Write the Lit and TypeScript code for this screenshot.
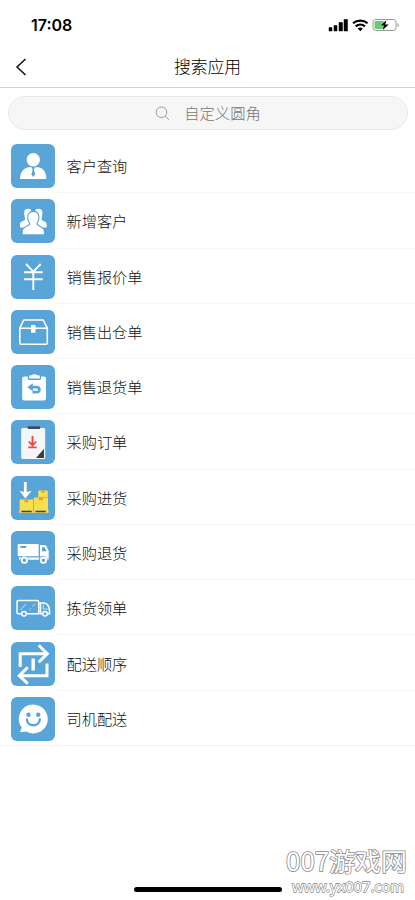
import { LitElement, html, css, svg } from 'lit';
import { customElement } from 'lit/decorators.js';

const icons = {
  customer: svg`<circle cx="22.3" cy="15.8" r="6.7" fill="#fff"/>
    <path d="M9 35C9 28 13 23.5 18 23.2H27C32 23.5 35.3 28 35.3 35Z" fill="#fff"/>
    <path d="M20.8 23h3l-.8 3 1.200 4.500-1.900 2.400-1.900-2.400 1.200-4.500Z" fill="#59a5d8"/>`,
  group: svg`<path d="M17 9.700c-2.800 0-4 1.800-3.800 4.300 0 3 .8 4 .8 6.500 0 1.500-5 1.500-5 4.500v3.500h11V10.500c-1-.6-1.800-.8-3-.8ZM27.600 9.700c2.800 0 4 1.800 3.800 4.300 0 3-.8 4-.8 6.500 0 1.500 5 1.500 5 4.500v3.500h-11V10.500c1-.6 1.800-.8 3-.8Z" fill="#fff"/>
    <path d="M22.300 13c-3.800 0-5.300 2.800-5 6 .2 2.600 1 4.200 2 5.300 0 4.200-7.600 2.700-7.600 8.700v2.300h21.200V33c0-6-7.600-4.500-7.600-8.700 1-1.100 1.800-2.700 2-5.300.3-3.200-1.200-6-5-6Z" fill="#fff" stroke="#59a5d8" stroke-width="2.400" paint-order="stroke"/>`,
  yen: svg`<path d="M15 9l7.300 7.700L29.700 9M13 17.200h18.700M13 24.200h18.700M22.300 16.700V35" fill="none" stroke="#fff" stroke-width="1.900"/>`,
  box: svg`<path d="M8.800 18.200L12.800 10h19.400l4.100 8.200V33q0 1.300-1.300 1.300H10.100q-1.300 0-1.300-1.300ZM8.800 18.200h27.500" fill="none" stroke="#fff" stroke-width="1.600" stroke-linejoin="round"/>
    <rect x="20" y="15" width="4.500" height="7.800" rx=".6" fill="#fff"/>`,
  back: svg`<rect x="11.200" y="11.500" width="23.800" height="24" rx="2" fill="#fff"/>
    <path d="M16.800 10.500v3q0 1.400 1.400 1.400h10.500q1.400 0 1.400-1.400v-3Z" fill="#59a5d8"/>
    <path d="M18.200 13.500v-2q0-1.200 1.200-1.200h1.600q.5-1 2.500-1t2.500 1h1.600q1.200 0 1.200 1.200v2Z" fill="#fff"/>
    <path d="M19 22.200h6.200c4.300 0 4.300 5 .3 5h-4" fill="none" stroke="#59a5d8" stroke-width="2.700"/>
    <path d="M16.300 22.200l5.500-4v8Z" fill="#59a5d8"/>`,
  order: svg`<rect x="10.200" y="8" width="24" height="31" rx="1.500" fill="#f5f6f7"/>
    <path d="M16.700 9V7.500q0-1.200 1.200-1.200h10q1.200 0 1.200 1.200V9Z" fill="#3e4e5c"/>
    <path d="M21.500 16v9M17.800 21.500l3.700 3.900 3.700-3.900M17.300 27.400h8.400" fill="none" stroke="#ee4545" stroke-width="1.800"/>
    <path d="M25 38h8V28.700Z" fill="#32414e"/>`,
  stock: svg`<path d="M12.900 6h2.800v10l5-1.300-6.400 7.800L8.500 14.700l4.400 1.300Z" fill="#fff"/>
    <path d="M8.700 23.500h13.600V34H8.700ZM22.800 21.500H37V34H22.800ZM27.200 14.500h9.600v6.600h-9.600Z" fill="#f8df4d"/>
    <path d="M13.500 23.500h3.800v3.200l-1.900-1-1.900 1ZM28 21.500h3.800v3.200l-1.900-1-1.900 1ZM30.500 14.500h3v2.500l-1.500-.8-1.500.8Z" fill="#e39a39"/>
    <path d="M8.200 33.800h29.300V37H8.200Z" fill="#ead66a"/>
    <path d="M10.500 35.500h10.200M24.500 35.500h10.200" stroke="#3f463e" stroke-width="1.500"/>
    <path d="M22.500 22v15" stroke="#a8a95c" stroke-width=".6"/>`,
  truck: svg`<path d="M7.700 13h20v12.300h-20q-1 0-1-1V14q0-1 1-1ZM29 14h4.500q1.600 0 2.200 1.500l2 4.500v8.500h-2c-1-4.800-6-4.500-6.700-2ZM8 26.500h20.500l-1 2.300h-10c-.8-3.600-7.400-3.600-8.300 0H8Z" fill="#fff"/>
    <path d="M9.300 15h6v2h-6ZM31 16.200h2.800l1.600 4H31Z" fill="#59a5d8"/>
    <circle cx="13.400" cy="29.200" r="3.900" fill="#59a5d8"/><circle cx="32.400" cy="29.200" r="3.900" fill="#59a5d8"/>
    <circle cx="13.400" cy="29.200" r="2.700" fill="none" stroke="#fff" stroke-width="1.800"/><circle cx="32.400" cy="29.200" r="2.700" fill="none" stroke="#fff" stroke-width="1.800"/>`,
  van: svg`<path d="M10.400 27.800H7.200q-1.200 0-1.200-1.200V15.800q0-1.200 1.200-1.200h19.300q1.200 0 1.200 1.200v12H15.600M31.400 27.800h-1.900V17h3.500c3.500 0 5.500 4 5.500 8v2.800h-2" fill="none" stroke="#fff" stroke-width="1.500"/>
    <circle cx="13" cy="27.800" r="2.300" fill="none" stroke="#fff" stroke-width="1.500"/><circle cx="34" cy="27.800" r="2.300" fill="none" stroke="#fff" stroke-width="1.500"/>
    <path d="M9.500 24l5.500-6M18.500 24l1.500-1.700M21.500 20.500l2.500-2.800M32.300 18.500v4.500h4.500" fill="none" stroke="#d5ebf8" stroke-width=".9"/>`,
  route: svg`<path d="M9.200 25V11.700h26M27.700 3.200l8.600 8.600-8.600 8.400M36 21.500v12.200H9M16.800 25.200L8.200 33.700l8.600 8" fill="none" stroke="#fff" stroke-width="3"/>
    <path d="M22.200 16.500v12" stroke="#fff" stroke-width="3.400"/>`,
  smile: svg`<path d="M22.300 7.500a14.500 14.500 0 1 1-7.200 27.100C13.500 35 11 35.300 9 35l1.800-4.200A14.500 14.500 0 0 1 22.300 7.500Z" fill="#fff"/>
    <circle cx="17.500" cy="17.800" r="2.200" fill="#59a5d8"/><circle cx="27.200" cy="17.800" r="2.200" fill="#59a5d8"/>
    <path d="M15.900 22.500c.3 7.600 12.600 7.600 12.900 0" fill="none" stroke="#59a5d8" stroke-width="2.400" stroke-linecap="round"/>`,
};

const apps: { label: string; icon: keyof typeof icons }[] = [
  { label: '客户查询', icon: 'customer' },
  { label: '新增客户', icon: 'group' },
  { label: '销售报价单', icon: 'yen' },
  { label: '销售出仓单', icon: 'box' },
  { label: '销售退货单', icon: 'back' },
  { label: '采购订单', icon: 'order' },
  { label: '采购进货', icon: 'stock' },
  { label: '采购退货', icon: 'truck' },
  { label: '拣货领单', icon: 'van' },
  { label: '配送顺序', icon: 'route' },
  { label: '司机配送', icon: 'smile' },
];

@customElement('app-root')
export class AppRoot extends LitElement {
  static styles = css`
    :host {
      display: flex;
      flex-direction: column;
      position: relative;
      box-sizing: border-box;
      height: 900px;
      overflow: hidden;
      background: #fff;
      color: #111;
      font-family: 'Noto Sans CJK SC', sans-serif;
      font-weight: 300;
    }
    svg { display: block; flex: none; }
    .status {
      display: flex;
      align-items: center;
      height: 50px;
      padding: 0 15px 0 31px;
      box-sizing: border-box;
    }
    .time {
      flex: 1;
      font: 600 16px/20px Inter, sans-serif;
      color: #000;
    }
    .nav {
      display: grid;
      grid-template-columns: 40px 1fr 40px;
      align-items: center;
      height: 38px;
      box-sizing: border-box;
      padding-bottom: 4px;
      border-bottom: 1px solid #d4d4d4;
    }
    .back { margin-left: 15px; }
    .title {
      padding-bottom: 2px;
      text-align: center;
      font-size: 16.8px;
      line-height: 24px;
      color: #000;
    }
    .search {
      display: flex;
      align-items: center;
      justify-content: center;
      gap: 14px;
      height: 34px;
      margin: 8px 7px 8px 8px;
      box-sizing: border-box;
      border: 1px solid #e9e9e9;
      border-radius: 17px;
      background: #f6f6f6;
      color: #777;
      font-size: 15.3px;
      line-height: 22px;
    }
    .hint { padding-bottom: 2px; }
    .row {
      display: flex;
      align-items: center;
      height: 55.27px;
      box-sizing: border-box;
      padding-left: 11px;
      border-bottom: 1px solid transparent;
    }
    .label {
      display: flex;
      align-items: center;
      flex: 1;
      height: 100%;
      margin-left: 2px;
      padding-left: 9.5px;
      padding-top: 1px;
      font-size: 15.2px;
      line-height: 22px;
      border-bottom: 1px solid #f6f6f6;
    }
    .row:last-child { border-bottom-color: #f2f2f2; }
    .row:last-child .label { border-bottom-color: transparent; }
    .tile { margin-top: 2px; border-radius: 6px; background: #59a5d8; }
    .home {
      position: absolute;
      left: 134px;
      top: 887px;
      width: 148px;
      height: 5px;
      border-radius: 3px;
      background: #000;
    }
    .mark {
      position: absolute;
      left: 280px;
      top: 835px;
      overflow: visible;
    }
    .mark text {
      fill: #fff;
      stroke: #888;
      paint-order: stroke;
    }
    .brand { font: 400 25px/1 'Noto Sans CJK SC', sans-serif; stroke-width: 1.5px; }
    .site { font: 400 15px/1 'Noto Sans', sans-serif; stroke-width: 1.3px; }
  `;

  render() {
    return html`
      <div class="status">
        <span class="time">17:08</span>
        <svg width="72" height="16" viewBox="0 0 72 16">
          <path d="M1 10.500h3V14H1ZM6 8.500h3V14H6ZM11 5.500h3.500V14H11ZM16 2.500h3.500V14H16Z" fill="#000" stroke="#000" stroke-width=".5" stroke-linejoin="round"/>
          <path d="M25 6.300a11 11 0 0 1 14.600 0M27.700 9.300a7 7 0 0 1 9.200 0" fill="none" stroke="#000" stroke-width="2.200"/>
          <path d="M29.700 11.500a4 4 0 0 1 5.200 0l-2.600 2.700Z" fill="#000"/>
          <rect x="45" y="2.500" width="23" height="11" rx="2.800" fill="#fff" stroke="#999"/>
          <rect x="46.500" y="4" width="10.500" height="8" rx="1.500" fill="#69ca75"/>
          <path d="M58.500 3.200l-6 5.400h3.400l-1.200 4.400 6-5.600h-3.500Z" fill="#000" stroke="#fff" stroke-width=".6" paint-order="stroke"/>
          <path d="M69.500 6v4c1.800-.6 1.800-3.400 0-4Z" fill="#999"/>
        </svg>
      </div>
      <div class="nav">
        <svg class="back" width="12" height="18" viewBox="0 0 12 18"><path d="M10.500 1L2 9l8.500 8" fill="none" stroke="#111" stroke-width="1.500"/></svg>
        <span class="title">搜索应用</span>
      </div>
      <div class="search">
        <svg width="15" height="15" viewBox="0 0 15 15"><circle cx="6.500" cy="6.300" r="5.300" fill="none" stroke="#999"/><path d="M10.300 10.200l3.700 3.600" stroke="#999"/></svg>
        <span class="hint">自定义圆角</span>
      </div>
      <div class="list">
        ${apps.map(
          (app) => html`<div class="row">
            <svg class="tile" width="44" height="44" viewBox="0 0 44 44">${icons[app.icon]}</svg>
            <span class="label">${app.label}</span>
          </div>`,
        )}
      </div>
      <div class="home"></div>
      <svg class="mark" width="135" height="65" viewBox="0 0 135 65">
        <text class="brand" x="6" y="35.500" textLength="121" lengthAdjust="spacingAndGlyphs">007游戏网</text>
        <text class="site" x="12" y="56.500" textLength="112" lengthAdjust="spacingAndGlyphs">www.yx007.com</text>
      </svg>
    `;
  }
}
